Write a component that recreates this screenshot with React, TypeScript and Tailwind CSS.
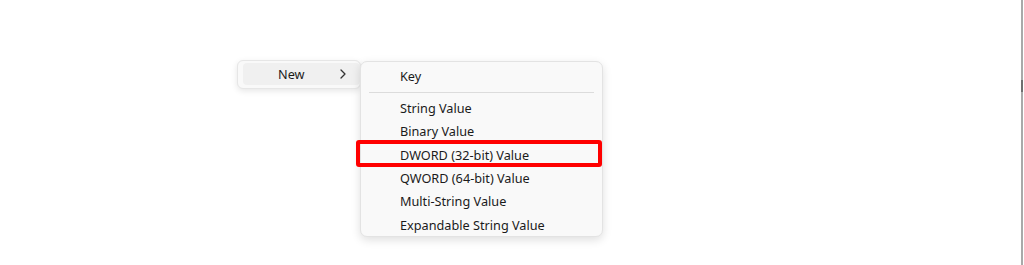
const items = [
  "String Value",
  "Binary Value",
  "DWORD (32-bit) Value",
  "QWORD (64-bit) Value",
  "Multi-String Value",
  "Expandable String Value",
];

export default function App() {
  return (
    <div
      className="w-[1024px] h-[265px] bg-white flex text-[12.7px] text-[#1b1b1b]"
      style={{ fontFamily: '"Segoe UI", "Noto Sans", "Open Sans", sans-serif' }}
    >
      <div className="flex-1 pt-[60px] pl-[237px] flex items-start">
        {/* parent menu */}
        <div className="w-[124px] h-[29px] bg-[#f9f9f9] border border-[#e6e6e6] rounded-[6px] shadow-[0_2px_6px_rgba(0,0,0,0.10)] p-[2px] pl-[5px] pr-0">
          <div className="h-[22px] bg-[#f0f0f0] rounded-[4px] flex items-center pl-[35px] pr-[14px]">
            <span className="pt-[2px]">New</span>
            <svg
              className="ml-auto"
              width="6"
              height="10"
              viewBox="0 0 6 10"
              fill="none"
            >
              <path d="M1 1l4 4-4 4" stroke="#333" strokeWidth="1.3" strokeLinecap="round" strokeLinejoin="round" />
            </svg>
          </div>
        </div>

        {/* submenu */}
        <div className="mt-[1px] -ml-[1px] w-[243px] h-[176px] bg-[#f9f9f9] border border-[#e3e3e3] rounded-[7px] shadow-[0_3px_10px_rgba(0,0,0,0.13)] pt-[4px] flex flex-col">
          <div className="h-[22px] shrink-0 flex items-center pl-[39px]">Key</div>
          <div className="h-[9px] shrink-0 flex items-center px-[8px]">
            <div className="h-px w-full bg-[#dcdcdc]" />
          </div>
          {items.map((label) => (
            <div key={label} className="relative h-[23.3px] shrink-0 flex items-center pl-[39px]">
              {label}
              {label.startsWith("DWORD") && (
                <div className="absolute left-[-5px] top-[-4px] right-[0px] bottom-[0px] border-[4px] border-[#ff0000] rounded-[3px]" />
              )}
            </div>
          ))}
        </div>
      </div>

      {/* right edge line */}
      <div className="w-[2px] mr-[1px] bg-[#a9a9a9] flex flex-col">
        <div className="h-[80px]" />
        <div className="h-[12px] bg-[#6f6f6f]" />
      </div>
    </div>
  );
}
